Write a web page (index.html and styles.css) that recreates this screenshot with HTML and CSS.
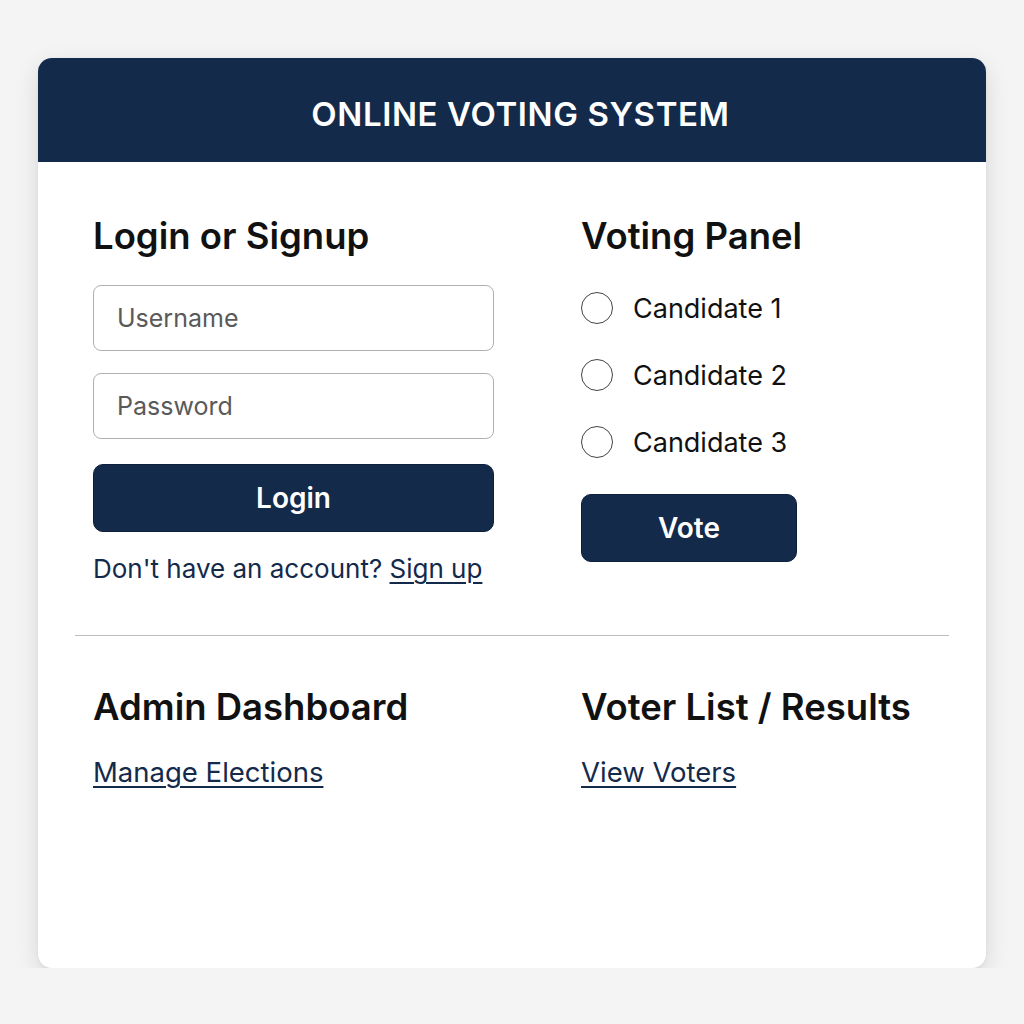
FILE: index.html
```html
<!DOCTYPE html>
<html lang="en">
<head>
<meta charset="utf-8">
<title>Online Voting System</title>
<link rel="stylesheet" href="styles.css">
</head>
<body>
<main class="card">
  <header class="card-header">
    <h1 class="title">ONLINE VOTING SYSTEM</h1>
  </header>
  <section class="grid top">
    <div class="col">
      <h2 class="heading">Login or Signup</h2>
      <input class="field" type="text" placeholder="Username">
      <input class="field field-2" type="password" placeholder="Password">
      <button class="btn btn-login">Login</button>
      <p class="note">Don't have an account? <a href="#" class="link">Sign up</a></p>
    </div>
    <div class="col">
      <h2 class="heading">Voting Panel</h2>
      <ul class="options">
        <li class="option"><span class="radio"></span><span>Candidate 1</span></li>
        <li class="option"><span class="radio"></span><span>Candidate 2</span></li>
        <li class="option"><span class="radio"></span><span>Candidate 3</span></li>
      </ul>
      <button class="btn btn-vote">Vote</button>
    </div>
  </section>
  <hr class="divider">
  <section class="grid bottom">
    <div class="col">
      <h2 class="heading">Admin Dashboard</h2>
      <a href="#" class="link link-block">Manage Elections</a>
    </div>
    <div class="col">
      <h2 class="heading">Voter List / Results</h2>
      <a href="#" class="link link-block">View Voters</a>
    </div>
  </section>
</main>
</body>
</html>
```

FILE: styles.css
```css
* { box-sizing: border-box; }
html, body { margin: 0; padding: 0; }
body {
  background: #f4f4f4;
  font-family: Inter, "Noto Sans", "Liberation Sans", sans-serif;
  color: #111;
  padding: 58px 38px 0;
}
.card {
  width: 948px;
  min-height: 910px;
  background: #fff;
  border-radius: 14px;
  overflow: hidden;
  box-shadow: 0 8px 24px rgba(0, 0, 0, 0.12), 0 1px 3px rgba(0, 0, 0, 0.06);
}
.card-header {
  height: 104px;
  background: #142a4b;
  display: flex;
  align-items: center;
  justify-content: center;
  padding-top: 8px;
  padding-left: 17px;
}
.title {
  margin: 0;
  color: #fff;
  font-size: 33px;
  font-weight: 600;
  letter-spacing: 0.6px;
  line-height: 40px;
}
.grid {
  display: grid;
  grid-template-columns: 401px 1fr;
  column-gap: 87px;
  padding: 0 55px;
}
.top { padding-top: 52px; padding-bottom: 51px; }
.bottom { padding-top: 49px; }
.col { display: flex; flex-direction: column; align-items: flex-start; }
.heading {
  margin: 0;
  font-size: 36.5px;
  line-height: 44px;
  font-weight: 600;
  color: #111;
}
.field {
  width: 401px;
  height: 66px;
  margin-top: 27px;
  border: 1px solid #b0b0b0;
  border-radius: 8px;
  padding: 0 23px;
  font-family: inherit;
  font-size: 25px;
  color: #333;
  background: #fff;
  outline: none;
}
.field::placeholder { color: #5a5a5a; }
.field-2 { margin-top: 22px; }
.btn {
  height: 68px;
  border: 1px solid #0d1f3a;
  border-radius: 10px;
  background: #142a4b;
  color: #fff;
  font-family: inherit;
  font-size: 28px;
  font-weight: 600;
  cursor: pointer;
}
.btn-login { width: 401px; margin-top: 25px; }
.btn-vote { width: 216px; margin-top: 32px; }
.note {
  margin: 22px 0 0;
  font-size: 26px;
  line-height: 30px;
  color: #142a4b;
}
.link { color: #142a4b; text-decoration: underline; text-underline-offset: 4px; text-decoration-thickness: 1.5px; }
.link-block { font-size: 27.5px; line-height: 32px; margin-top: 27px; }
.options { list-style: none; margin: 30px 0 0; padding: 0; display: flex; flex-direction: column; gap: 27px; }
.option {
  display: flex;
  align-items: center;
  gap: 20px;
  height: 40px;
  font-size: 27px;
  color: #111;
}
.radio {
  width: 32px;
  height: 32px;
  border: 1.5px solid #444;
  border-radius: 50%;
  flex: none;
}
.divider {
  margin: 0 37px;
  border: 0;
  border-top: 1px solid #bdbdbd;
  height: 0;
}
```
